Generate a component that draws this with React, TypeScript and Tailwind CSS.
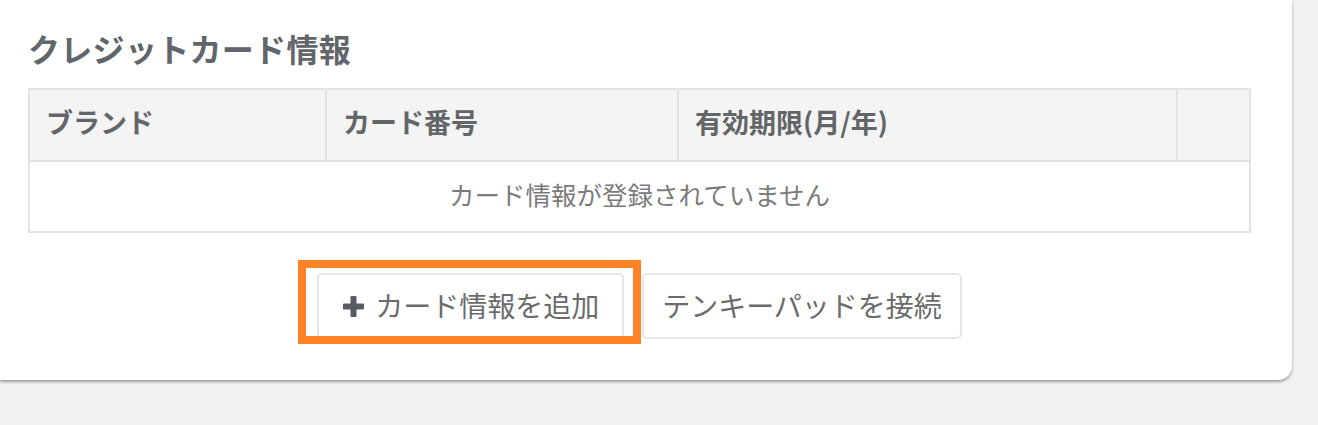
import React from "react";

const columns = [
  { name: "ブランド", width: "w-[297px]" },
  { name: "カード番号", width: "w-[352px]" },
  { name: "有効期限(月/年)", width: "w-[499px]" },
  { name: "", width: "" },
];

function PlusIcon() {
  return (
    <svg viewBox="0 0 21 21" className="w-[21px] h-[21px] mr-[11px] mt-[3px] text-[#585c60]" fill="currentColor">
      <rect x="7.5" y="0" width="6" height="21" rx="1.2" />
      <rect x="0" y="7.5" width="21" height="6" rx="1.2" />
    </svg>
  );
}

export default function App() {
  return (
    <div
      className="w-[1318px] h-[425px] bg-[#f2f2f2] overflow-hidden"
      style={{ fontFamily: '"Noto Sans CJK JP", "Noto Sans", sans-serif' }}
    >
      {/* Card */}
      <div className="w-[1292px] bg-white rounded-br-[14px] shadow-[0_2px_3px_rgba(0,0,0,0.35)] pl-[28px] pr-[41px] pt-[25px] pb-[41px]">
        <h2 className="text-[32px] leading-[46px] font-bold text-[#62666a] tracking-[0.3px]">
          クレジットカード情報
        </h2>

        {/* Table */}
        <table className="mt-[17px] w-full border-collapse border-2 border-[#e3e3e3]">
          <thead>
            <tr className="bg-[#f4f4f4] h-[72px]">
              {columns.map((col, i) => (
                <th
                  key={i}
                  className={`${col.width} border-2 border-[#e3e3e3] px-[16px] pb-[5px] text-left text-[27px] font-bold text-[#636669]`}
                >
                  {col.name}
                </th>
              ))}
            </tr>
          </thead>
          <tbody>
            <tr className="h-[71px]">
              <td colSpan={4} className="pb-[5px] text-center text-[25.5px] text-[#7b7b7b] border-2 border-[#e3e3e3]">
                カード情報が登録されていません
              </td>
            </tr>
          </tbody>
        </table>

        {/* Buttons */}
        <div className="mt-[40px] flex justify-center gap-[18px]">
          <div className="relative">
            <button className="h-[66px] w-[307px] flex items-center pl-[24px] pb-[3px] border-2 border-[#e4e7ea] rounded-[5px] bg-white text-[28px] text-[#6b6b6b]">
              <PlusIcon />
              カード情報を追加
            </button>
            {/* highlight */}
            <div className="absolute left-[-19px] right-[-17px] top-[-13px] bottom-[-5px] border-[8px] border-[#ff8227]" />
          </div>
          <button className="h-[66px] px-[18px] pb-[3px] border-2 border-[#e4e7ea] rounded-[5px] bg-white text-[28px] text-[#6b6b6b]">
            テンキーパッドを接続
          </button>
        </div>
      </div>
    </div>
  );
}
